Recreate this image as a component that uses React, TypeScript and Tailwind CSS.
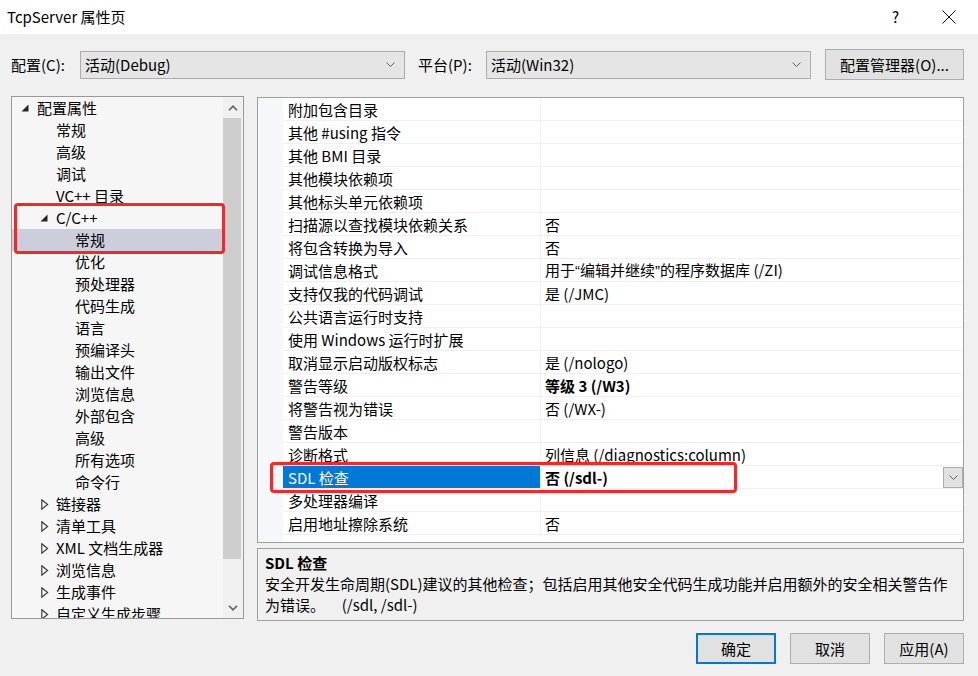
import React from "react";

type TreeNode = { label: string; level: 0 | 1 | 2; state?: "open" | "closed"; selected?: boolean };

// tree of the left pane, one row = 22px
const TREE: TreeNode[] = [
  { label: "配置属性", level: 0, state: "open" },
  { label: "常规", level: 1 },
  { label: "高级", level: 1 },
  { label: "调试", level: 1 },
  { label: "VC++ 目录", level: 1 },
  { label: "C/C++", level: 1, state: "open" },
  { label: "常规", level: 2, selected: true },
  { label: "优化", level: 2 },
  { label: "预处理器", level: 2 },
  { label: "代码生成", level: 2 },
  { label: "语言", level: 2 },
  { label: "预编译头", level: 2 },
  { label: "输出文件", level: 2 },
  { label: "浏览信息", level: 2 },
  { label: "外部包含", level: 2 },
  { label: "高级", level: 2 },
  { label: "所有选项", level: 2 },
  { label: "命令行", level: 2 },
  { label: "链接器", level: 1, state: "closed" },
  { label: "清单工具", level: 1, state: "closed" },
  { label: "XML 文档生成器", level: 1, state: "closed" },
  { label: "浏览信息", level: 1, state: "closed" },
  { label: "生成事件", level: 1, state: "closed" },
  { label: "自定义生成步骤", level: 1, state: "closed" },
];

const PAD = ["pl-[9px]", "pl-[28px]", "pl-[47px]"];

interface Prop {
  name: string;
  value: React.ReactNode;
  bold?: boolean;
  selected?: boolean;
}

// curly quotes are drawn narrow in the original UI font
const q = (c: string) => <span className="[font-family:'Liberation_Sans',sans-serif]">{c}</span>;

const PROPS: Prop[] = [
  { name: "附加包含目录", value: "" },
  { name: "其他 #using 指令", value: "" },
  { name: "其他 BMI 目录", value: "" },
  { name: "其他模块依赖项", value: "" },
  { name: "其他标头单元依赖项", value: "" },
  { name: "扫描源以查找模块依赖关系", value: "否" },
  { name: "将包含转换为导入", value: "否" },
  {
    name: "调试信息格式",
    value: (
      <>
        用于{q("“")}编辑并继续{q("”")}的程序数据库 (/ZI)
      </>
    ),
  },
  { name: "支持仅我的代码调试", value: "是 (/JMC)" },
  { name: "公共语言运行时支持", value: "" },
  { name: "使用 Windows 运行时扩展", value: "" },
  { name: "取消显示启动版权标志", value: "是 (/nologo)" },
  { name: "警告等级", value: "等级 3 (/W3)", bold: true },
  { name: "将警告视为错误", value: "否 (/WX-)" },
  { name: "警告版本", value: "" },
  { name: "诊断格式", value: "列信息 (/diagnostics:column)" },
  { name: "SDL 检查", value: "否 (/sdl-)", bold: true, selected: true },
  { name: "多处理器编译", value: "" },
  { name: "启用地址擦除系统", value: "否" },
];

function ChevronDown({ className = "" }: { className?: string }) {
  return (
    <svg width="9" height="5" viewBox="0 0 9 5" className={className}>
      <path d="M0.5 0.5 L4.5 4.5 L8.5 0.5" fill="none" stroke="#606060" strokeWidth="1" />
    </svg>
  );
}

function ScrollArrow({ up }: { up?: boolean }) {
  return (
    <svg width="10" height="6" viewBox="0 0 10 6">
      <path
        d={up ? "M1 5.2 L5 1.2 L9 5.2" : "M1 0.8 L5 4.8 L9 0.8"}
        fill="none"
        stroke="#606060"
        strokeWidth="1.6"
      />
    </svg>
  );
}

function Expander({ state }: { state?: "open" | "closed" }) {
  if (state === "open")
    return (
      <svg width="8" height="8" viewBox="0 0 8 8">
        <path d="M7.5 0.5 L7.5 7.5 L0.5 7.5 Z" fill="#262626" />
      </svg>
    );
  if (state === "closed")
    return (
      <svg width="8" height="11" viewBox="0 0 8 11" className="ml-px">
        <path d="M0.8 0.8 L6.6 5.5 L0.8 10.2 Z" fill="none" stroke="#333" strokeWidth="1.1" />
      </svg>
    );
  return null;
}

function Tree() {
  return (
    <div className="relative w-[233px] h-[523px] border border-[#999] bg-[#f6f6f6] flex">
      <div className="flex-1 overflow-hidden">
        {TREE.map((n, i) => (
          <div
            key={i}
            className={`flex items-center h-[22px] ${PAD[n.level]} ${n.selected ? "bg-[#cccedb]" : ""}`}
          >
            <span className="w-[16px] flex items-center">
              <Expander state={n.state} />
            </span>
            <span className="text-[15px] leading-[22px] text-black whitespace-nowrap">{n.label}</span>
          </div>
        ))}
      </div>
      <div className="w-[20px] bg-[#f0f0f0] flex flex-col">
        <div className="h-[21px] flex items-center justify-center">
          <ScrollArrow up />
        </div>
        <div className="h-[441px] mr-[2px] bg-[#cdcdcd]" />
        <div className="flex-1 flex items-end justify-center pb-[7px]">
          <ScrollArrow />
        </div>
      </div>
      {/* annotation box */}
      <div className="pointer-events-none absolute left-[2px] top-[106px] w-[211px] h-[51px] border-[3px] border-[#fe2424] rounded-[4px]" />
    </div>
  );
}

function PropertyGrid() {
  return (
    <div className="relative h-[446px] border border-[#a0a0a0] bg-white flex">
      <div className="w-[25px] bg-[#f5f7fa]" />
      <div className="flex-1">
        {PROPS.map((p, i) => (
          <div key={i} className="flex h-[23px] border-b border-[#f0f0f0]">
            <div
              className={`w-[258px] border-r border-[#f0f0f0] pl-[5px] pt-px text-[15px] leading-[21px] whitespace-nowrap ${
                p.selected ? "bg-[#0078d7] text-white" : "text-black"
              }`}
            >
              {p.name}
            </div>
            <div
              className={`flex-1 flex items-center pl-[4px] text-[15px] leading-[22px] whitespace-nowrap text-black ${
                p.bold ? "font-bold" : ""
              }`}
            >
              <span className="flex-1 pt-px">{p.value}</span>
              {p.selected && (
                <span className="w-[20px] h-[21px] border border-[#adadad] bg-[#e1e1e1] flex items-center justify-center">
                  <ChevronDown />
                </span>
              )}
            </div>
          </div>
        ))}
      </div>
      <div className="pointer-events-none absolute left-[12px] top-[364px] w-[467px] h-[31px] border-[3px] border-[#fe2424] rounded-[4px]" />
    </div>
  );
}

function Combo({ text, w }: { text: string; w: string }) {
  return (
    <div className={`${w} h-[28px] border border-[#acacac] bg-[#e5e5e5] flex items-center pl-[4px] pr-[9px]`}>
      <span className="flex-1 text-[15px] leading-[22px] text-black">{text}</span>
      <ChevronDown />
    </div>
  );
}

function Button({ label, primary }: { label: string; primary?: boolean }) {
  return (
    <div
      className={`w-[80px] h-[31px] bg-[#e1e1e1] flex items-center justify-center text-[15px] leading-[22px] text-black ${
        primary ? "border-2 border-[#0078d7]" : "border border-[#adadad]"
      }`}
    >
      {label}
    </div>
  );
}

export default function App() {
  return (
    <div className="w-[978px] h-[676px] bg-[#f0f0f0] flex flex-col overflow-hidden [font-family:'Noto_Sans_CJK_SC','Microsoft_YaHei',sans-serif]">
      {/* title bar */}
      <div className="h-[34px] bg-white flex items-center justify-between pl-[7px] pr-[22px]">
        <span className="text-[15px] leading-[20px] text-black">TcpServer 属性页</span>
        <div className="flex items-center gap-[43px]">
          <span className="text-[15px] leading-[20px] text-black">?</span>
          <svg width="14" height="14" viewBox="0 0 14 14">
            <path d="M0.5 0.5 L13.5 13.5 M13.5 0.5 L0.5 13.5" stroke="#111" strokeWidth="1" />
          </svg>
        </div>
      </div>

      {/* configuration row */}
      <div className="mt-[15px] h-[31px] flex items-center pl-[11px]">
        <span className="w-[69px] text-[15px] leading-[22px] text-black">配置(C):</span>
        <Combo text="活动(Debug)" w="w-[325px]" />
        <span className="ml-[13px] w-[68px] text-[15px] leading-[22px] text-black">平台(P):</span>
        <Combo text="活动(Win32)" w="w-[325px]" />
        <div className="ml-[14px] w-[139px] h-[31px] border border-[#adadad] bg-[#e1e1e1] flex items-center justify-center text-[15px] leading-[22px] text-black">
          配置管理器(O)...
        </div>
      </div>

      {/* main area */}
      <div className="mt-[16px] flex pl-[11px]">
        <Tree />
        <div className="ml-[13px] mt-px w-[707px] flex flex-col">
          <PropertyGrid />
          <div className="mt-[5px] h-[73px] border border-[#a0a0a0] pl-[7px] pt-[3px] text-[15px] leading-[21px] text-black">
            <div className="font-bold">SDL 检查</div>
            <div>安全开发生命周期(SDL)建议的其他检查；包括启用其他安全代码生成功能并启用额外的安全相关警告作</div>
            <div className="whitespace-pre">为错误。     (/sdl, /sdl-)</div>
          </div>
        </div>
      </div>

      {/* dialog buttons */}
      <div className="mt-[12px] flex justify-end gap-[14px] pr-[14px]">
        <Button label="确定" primary />
        <Button label="取消" />
        <Button label="应用(A)" />
      </div>
    </div>
  );
}
